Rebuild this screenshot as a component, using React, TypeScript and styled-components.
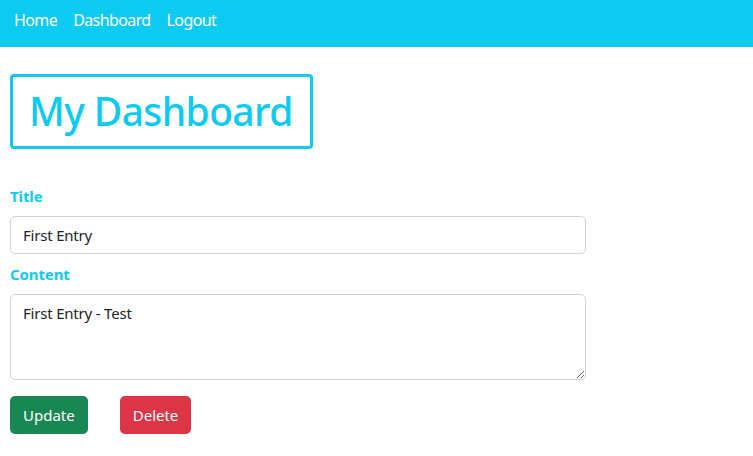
import React from "react";
import styled, { createGlobalStyle } from "styled-components";

const Global = createGlobalStyle`
  html, body { margin: 0; padding: 0; background: #fff; }
  body {
    font-family: "Noto Sans", "Open Sans", sans-serif;
    font-size: 16px;
    line-height: 1.5;
    color: #212529;
  }
  * { box-sizing: border-box; }
`;

const NavBar = styled.nav`
  height: 47px;
  background: #0dcaf0;
  display: flex;
  align-items: flex-start;
  padding: 8px 14px 0;
  gap: 16px;
`;

const NavLink = styled.a`
  color: #fff;
  text-decoration: none;
  font-size: 16px;
  line-height: 24px;
  letter-spacing: -0.6px;
`;

const Main = styled.main`
  padding: 27px 10px 0;
`;

const HeadingBox = styled.div`
  display: inline-block;
  border: 3px solid #0dcaf0;
  border-radius: 4px;
  padding: 10px 17px 11px 16px;
`;

const Heading = styled.h1`
  margin: 0;
  color: #0dcaf0;
  font-size: 39px;
  font-weight: 500;
  line-height: 48px;
  letter-spacing: -0.6px;
`;

const Form = styled.form`
  width: 576px;
  margin-top: 35px;
  display: flex;
  flex-direction: column;
`;

const Label = styled.label`
  color: #0dcaf0;
  font-weight: 700;
  font-size: 15px;
  line-height: 24px;
  margin-bottom: 8px;
  letter-spacing: -0.1px;
`;

const fieldCss = `
  width: 100%;
  border: 1px solid #ced4da;
  border-radius: 5px;
  padding: 6px 12px;
  font-family: "Noto Sans", "Open Sans", sans-serif;
  font-size: 15px;
  line-height: 24px;
  color: #212529;
  background: #fff;
  letter-spacing: -0.2px;
`;

const Input = styled.input`
  ${fieldCss}
  height: 38px;
  margin-bottom: 8px;
`;

const TextArea = styled.textarea`
  ${fieldCss}
  height: 86px;
  display: block;
  resize: vertical;
  margin: 0;
`;

const Actions = styled.div`
  display: flex;
  gap: 32px;
  margin-top: 16px;
`;

const Button = styled.button<{ $variant: "success" | "danger" }>`
  height: 38px;
  padding: 0 13px;
  border: none;
  border-radius: 5px;
  color: #fff;
  font-family: "Noto Sans", "Open Sans", sans-serif;
  font-size: 15px;
  letter-spacing: 0;
  background: ${(p) => (p.$variant === "success" ? "#198754" : "#dc3545")};
`;

export default function App() {
  return (
    <>
      <Global />
      <NavBar>
        <NavLink href="#">Home</NavLink>
        <NavLink href="#">Dashboard</NavLink>
        <NavLink href="#">Logout</NavLink>
      </NavBar>
      <Main>
        <HeadingBox>
          <Heading>My Dashboard</Heading>
        </HeadingBox>
        <Form onSubmit={(e) => e.preventDefault()}>
          <Label htmlFor="title">Title</Label>
          <Input id="title" defaultValue="First Entry" />
          <Label htmlFor="content">Content</Label>
          <TextArea id="content" defaultValue="First Entry - Test" />
          <Actions>
            <Button type="button" $variant="success">Update</Button>
            <Button type="button" $variant="danger">Delete</Button>
          </Actions>
        </Form>
      </Main>
    </>
  );
}
